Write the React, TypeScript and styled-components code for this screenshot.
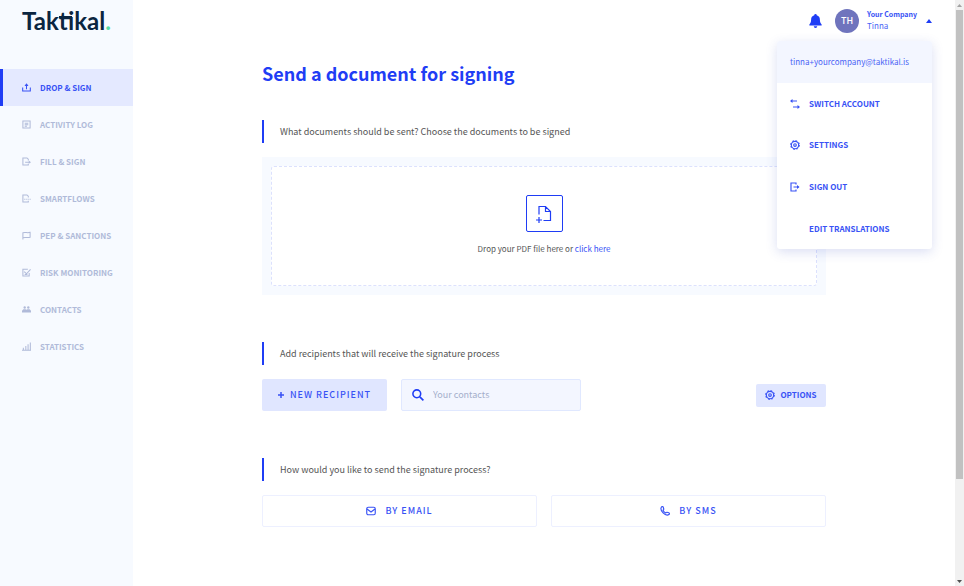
import React from "react";
import styled, { createGlobalStyle, css } from "styled-components";

const blue = "#1f3df5";
const textBlue = "#3852f5";
const softBlue = "#4a63f5";
const muted = "#b0bad9";

const GlobalStyle = createGlobalStyle`
  *, *::before, *::after { box-sizing: border-box; }
  html, body { margin: 0; background: #fff; }
  body, button, input {
    font-family: "Noto Sans CJK SC", "Noto Sans", sans-serif;
  }
  button { margin: 0; padding: 0; border: 0; background: none; cursor: pointer; }
  a { text-decoration: none; }
`;

const Shell = styled.div`
  display: flex;
  height: 100vh;
  overflow: hidden;
`;

const Sidebar = styled.aside`
  flex: 0 0 133px;
  background: #f7faff;
`;

const Logo = styled.a`
  display: block;
  height: 69px;
  padding: 8px 0 0 22px;
  font: 700 24px/26px Lato, sans-serif;
  color: #0b2540;
`;

const LogoJoin = styled.span`
  position: relative;
  &::before {
    content: "";
    position: absolute;
    left: 0;
    top: 10px;
    width: 13px;
    height: 2px;
    background: currentColor;
  }
`;

const LogoDot = styled.span`
  color: #58dba4;
`;

const NavItem = styled.a<{ $active?: boolean }>`
  display: flex;
  align-items: center;
  gap: 9px;
  height: 37px;
  padding-left: 19px;
  border-left: 3px solid transparent;
  font-size: 8px;
  line-height: 12px;
  font-weight: 700;
  white-space: nowrap;
  color: ${muted};
  ${(p) =>
    p.$active &&
    css`
      background: #e4e9ff;
      border-color: ${blue};
      color: ${textBlue};
    `}
`;

const Main = styled.main`
  flex: 1;
  min-width: 0;
  padding: 0 23px;
`;

const Header = styled.header`
  display: flex;
  justify-content: flex-end;
  align-items: center;
  height: 41px;
  position: relative;
`;

const BellButton = styled.button`
  display: flex;
  margin-right: 13px;
`;

const Account = styled.button`
  display: flex;
  align-items: center;
  text-align: left;
  color: ${softBlue};
`;

const Avatar = styled.span`
  width: 24px;
  height: 24px;
  margin-right: 8px;
  border-radius: 50%;
  background: #6f74bd;
  color: #fff;
  font-size: 9px;
  line-height: 24px;
  font-weight: 500;
  text-align: center;
`;

const AccountText = styled.span`
  display: flex;
  flex-direction: column;
  margin-right: 9px;
  padding-bottom: 2px;
  font-size: 8px;
  line-height: 12px;
`;

const Company = styled.span`
  font-size: 7px;
  font-weight: 700;
  color: ${textBlue};
`;

const Menu = styled.div`
  position: absolute;
  top: 41px;
  right: 0;
  width: 155px;
  background: #fff;
  border-radius: 3px;
  overflow: hidden;
  box-shadow: 0 3px 12px rgba(50, 70, 190, 0.18);
`;

const MenuEmail = styled.div`
  height: 42px;
  padding-left: 13px;
  background: #f3f6ff;
  color: ${softBlue};
  font-size: 8px;
  line-height: 42px;
`;

const MenuItem = styled.button`
  display: grid;
  grid-template-columns: 10px auto;
  justify-content: start;
  align-items: center;
  column-gap: 9px;
  width: 100%;
  height: 42px;
  padding-left: 13px;
  color: ${textBlue};
  font-size: 8px;
  line-height: 12px;
  font-weight: 700;
  text-align: left;
  &:first-of-type, &:last-child { height: 41px; }
`;

const MenuLabel = styled.span`
  grid-column: 2;
`;

const Content = styled.div`
  width: 100%;
  max-width: 564px;
  margin: 0 auto;
`;

const Title = styled.h1`
  margin: 17px 0 32px;
  font-size: 18px;
  line-height: 30px;
  font-weight: 700;
  color: ${blue};
`;

const Section = styled.section`
  margin-bottom: 47px;
`;

const SectionTitle = styled.h2`
  margin: 0 0 14px;
  padding-left: 16px;
  border-left: 2px solid ${blue};
  font-size: 9px;
  line-height: 23px;
  font-weight: 400;
  color: #555;
`;

const DropFrame = styled.div`
  padding: 9px;
  background: #f7faff;
`;

const DropZone = styled.div`
  display: flex;
  flex-direction: column;
  align-items: center;
  height: 120px;
  padding-top: 28px;
  border: 1px dashed #dce1fd;
  border-radius: 3px;
  background: #fff;
  font-size: 8px;
  line-height: 14px;
  color: #555;
  p { margin: 10px 0 0; }
  a { color: ${textBlue}; }
`;

const UploadButton = styled.button`
  display: grid;
  place-items: center;
  width: 37px;
  height: 37px;
  border: 1px solid ${blue};
  border-radius: 2px;
  color: ${blue};
`;

const RecipientRow = styled.div`
  display: flex;
  align-items: center;
`;

const SolidButton = styled.button<{ $small?: boolean }>`
  display: flex;
  align-items: center;
  justify-content: center;
  gap: ${(p) => (p.$small ? 5 : 6)}px;
  width: ${(p) => (p.$small ? 70 : 125)}px;
  height: ${(p) => (p.$small ? 23 : 32)}px;
  margin-left: ${(p) => (p.$small ? "auto" : "0")};
  border-radius: 2px;
  background: #e0e6ff;
  color: ${textBlue};
  font-size: ${(p) => (p.$small ? 8 : 9)}px;
  line-height: 14px;
  font-weight: ${(p) => (p.$small ? 700 : 500)};
  letter-spacing: ${(p) => (p.$small ? "normal" : "1px")};
  white-space: nowrap;
`;

const SearchBox = styled.label`
  display: flex;
  align-items: center;
  gap: 9px;
  width: 180px;
  height: 32px;
  margin-left: 14px;
  padding: 0 10px;
  border: 1px solid #e0e8ff;
  border-radius: 2px;
  background: #f3f6ff;
  color: ${blue};
`;

const SearchInput = styled.input`
  flex: 1;
  min-width: 0;
  padding: 0;
  border: 0;
  outline: 0;
  background: transparent;
  font-size: 9px;
  line-height: 16px;
  color: #555;
  &::placeholder { color: #a4aecb; opacity: 1; }
`;

const SendGrid = styled.div`
  display: grid;
  grid-template-columns: 1fr 1fr;
  gap: 14px;
`;

const OutlineButton = styled.button`
  display: flex;
  align-items: center;
  justify-content: center;
  gap: 9px;
  height: 32px;
  border: 1px solid #edf0ff;
  border-radius: 2px;
  color: ${textBlue};
  font-size: 9px;
  line-height: 14px;
  font-weight: 500;
  letter-spacing: 1px;
`;

const ScrollTrack = styled.div`
  flex: 0 0 9px;
  display: flex;
  flex-direction: column;
  align-items: center;
  background: #f1f1f1;
`;

const ScrollArrow = styled.svg<{ $dim?: boolean }>`
  flex: none;
  width: 9px;
  height: 10px;
  fill: ${(p) => (p.$dim ? "#a3a3a3" : "#505050")};
`;

const ScrollThumb = styled.div`
  width: 7px;
  height: 80%;
  margin-bottom: auto;
  background: #c1c1c1;
`;

type IconProps = { size?: number; children: React.ReactNode };
const Icon = ({ size = 10, children }: IconProps) => (
  <svg width={size} height={size} viewBox="0 0 20 20" fill="none" stroke="currentColor" strokeWidth="2.3" aria-hidden="true">
    {children}
  </svg>
);

const GearShape = () => (
  <>
    <circle cx="10" cy="10" r="7.4" />
    <circle cx="10" cy="10" r="9" strokeWidth="1.8" strokeDasharray="3.6 3.47" />
    <circle cx="10" cy="10" r="2.6" />
  </>
);

const navItems = [
  { label: "DROP & SIGN", icon: <><path d="M1.500 10v8h17v-8M10 14V4" /><path d="M5.500 6.500L10 .500l4.500 6z" fill="currentColor" stroke="none" /></> },
  { label: "ACTIVITY LOG", icon: <path d="M2 2h16v16H2zM6 7h8M6 10.500h8M6 14h5" /> },
  { label: "FILL & SIGN", icon: <><path d="M14 8V5l-3-3H2v16h12v-3M7 11.500h10" /><path d="M15 8l5 3.500-5 3.500z" fill="currentColor" stroke="none" /></> },
  { label: "SMARTFLOWS", icon: <><path d="M14 8V5l-3-3H2v16h12v-3" /><path d="M5 11.500h15" strokeDasharray="2.500 2" /></> },
  { label: "PEP & SANCTIONS", icon: <path d="M2 19V4c5-2 10 1 16-1v11c-6 2-10-1-16 1" /> },
  { label: "RISK MONITORING", icon: <path d="M13 3H2v15h14v-7M5 8l5 5 9-10M6 14.500h6" /> },
  { label: "CONTACTS", icon: <><circle cx="6" cy="5.500" r="2.600" fill="currentColor" stroke="none" /><circle cx="14" cy="5.500" r="2.600" fill="currentColor" stroke="none" /><path d="M0 16.500v-4l3-3h5l2 1 2-1h5l3 3v4z" fill="currentColor" stroke="none" /></> },
  { label: "STATISTICS", icon: <path d="M0 18.500h20M3 18v-5M8.500 18V9M13.500 18V5M18.500 18V1" /> },
];

export default function App() {
  return (
    <>
      <GlobalStyle />
      <Shell>
        <Sidebar>
          <Logo href="#">
            Tak<LogoJoin>ti</LogoJoin>kal<LogoDot>.</LogoDot>
          </Logo>
          <nav>
            {navItems.map((item, i) => (
              <NavItem key={item.label} href="#" $active={i === 0}>
                <Icon size={9}>{item.icon}</Icon>
                {item.label}
              </NavItem>
            ))}
          </nav>
        </Sidebar>
        <Main>
          <Header>
            <BellButton aria-label="Notifications">
              <svg width="13" height="14" viewBox="0 0 26 28" fill={blue} aria-hidden="true">
                <path d="M13 0a2.500 2.500 0 0 1 2.500 2.700c4 1.200 6.300 4.300 6.300 8.800 0 5 1.200 7 3.500 9.500V23H.7v-2c2.300-2.500 3.500-4.500 3.500-9.500 0-4.500 2.300-7.600 6.300-8.800A2.500 2.500 0 0 1 13 0zM9.500 24.500h7a3.500 3.500 0 0 1-7 0z" />
              </svg>
            </BellButton>
            <Account aria-expanded="true">
              <Avatar>TH</Avatar>
              <AccountText>
                <Company>Your Company</Company>
                <span>Tinna</span>
              </AccountText>
              <svg width="6" height="4" viewBox="0 0 6 4" fill={blue} aria-hidden="true"><path d="M3 0l3 4H0z" /></svg>
            </Account>
            <Menu>
              <MenuEmail>tinna+yourcompany@taktikal.is</MenuEmail>
              <MenuItem>
                <Icon><path d="M3 4h11M6 16h11" /><path d="M0 4l5-4v8zM20 16l-5-4v8z" fill="currentColor" stroke="none" /></Icon>
                <MenuLabel>SWITCH ACCOUNT</MenuLabel>
              </MenuItem>
              <MenuItem>
                <Icon><GearShape /></Icon>
                <MenuLabel>SETTINGS</MenuLabel>
              </MenuItem>
              <MenuItem>
                <Icon><path d="M12 5V2H2v16h10v-3M7 10h10" /><path d="M19 10l-5-4v8z" fill="currentColor" stroke="none" /></Icon>
                <MenuLabel>SIGN OUT</MenuLabel>
              </MenuItem>
              <MenuItem>
                <MenuLabel>EDIT TRANSLATIONS</MenuLabel>
              </MenuItem>
            </Menu>
          </Header>
          <Content>
            <Title>Send a document for signing</Title>
            <Section>
              <SectionTitle>What documents should be sent? Choose the documents to be signed</SectionTitle>
              <DropFrame>
                <DropZone>
                  <UploadButton aria-label="Choose a PDF file">
                    <svg width="16" height="18" viewBox="0 0 32 36" fill="none" stroke="currentColor" strokeWidth="2.400" aria-hidden="true">
                      <path d="M6 19V3h13l10 10v18H15M19 3v10h10M0 30h12M6 24v12" />
                    </svg>
                  </UploadButton>
                  <p>Drop your PDF file here or <a href="#">click here</a></p>
                </DropZone>
              </DropFrame>
            </Section>
            <Section>
              <SectionTitle>Add recipients that will receive the signature process</SectionTitle>
              <RecipientRow>
                <SolidButton>
                  <svg width="6" height="6" viewBox="0 0 6 6" stroke="currentColor" strokeWidth="1.500" aria-hidden="true"><path d="M3 0v6M0 3h6" /></svg>
                  NEW RECIPIENT
                </SolidButton>
                <SearchBox>
                  <Icon size={12}><circle cx="8" cy="8" r="6.500" strokeWidth="2.600" /><path d="M13 13l6 6" strokeWidth="2.800" /></Icon>
                  <SearchInput type="search" placeholder="Your contacts" aria-label="Your contacts" />
                </SearchBox>
                <SolidButton $small>
                  <Icon><GearShape /></Icon>
                  OPTIONS
                </SolidButton>
              </RecipientRow>
            </Section>
            <Section>
              <SectionTitle>How would you like to send the signature process?</SectionTitle>
              <SendGrid>
                <OutlineButton>
                  <Icon><rect x="1.500" y="2.500" width="17" height="15" rx="3" /><path d="M2 6l8 6 8-6" /></Icon>
                  BY EMAIL
                </OutlineButton>
                <OutlineButton>
                  <Icon><path d="M3 2c1-1.500 3-1 3.500.500L7.500 6c.300 1-.200 1.500-1.500 2.500 1 2.500 3 4.500 5.500 5.500 1-1.300 1.500-1.800 2.500-1.500l3.500 1c1.500.500 2 2.500.500 3.500C11 21.500-1.500 9 3 2z" /></Icon>
                  BY SMS
                </OutlineButton>
              </SendGrid>
            </Section>
          </Content>
        </Main>
        <ScrollTrack aria-hidden="true">
          <ScrollArrow $dim viewBox="0 0 9 10"><path d="M4.500 4L7 7H2z" /></ScrollArrow>
          <ScrollThumb />
          <ScrollArrow viewBox="0 0 9 10"><path d="M4.500 7L7 4H2z" /></ScrollArrow>
        </ScrollTrack>
      </Shell>
    </>
  );
}
